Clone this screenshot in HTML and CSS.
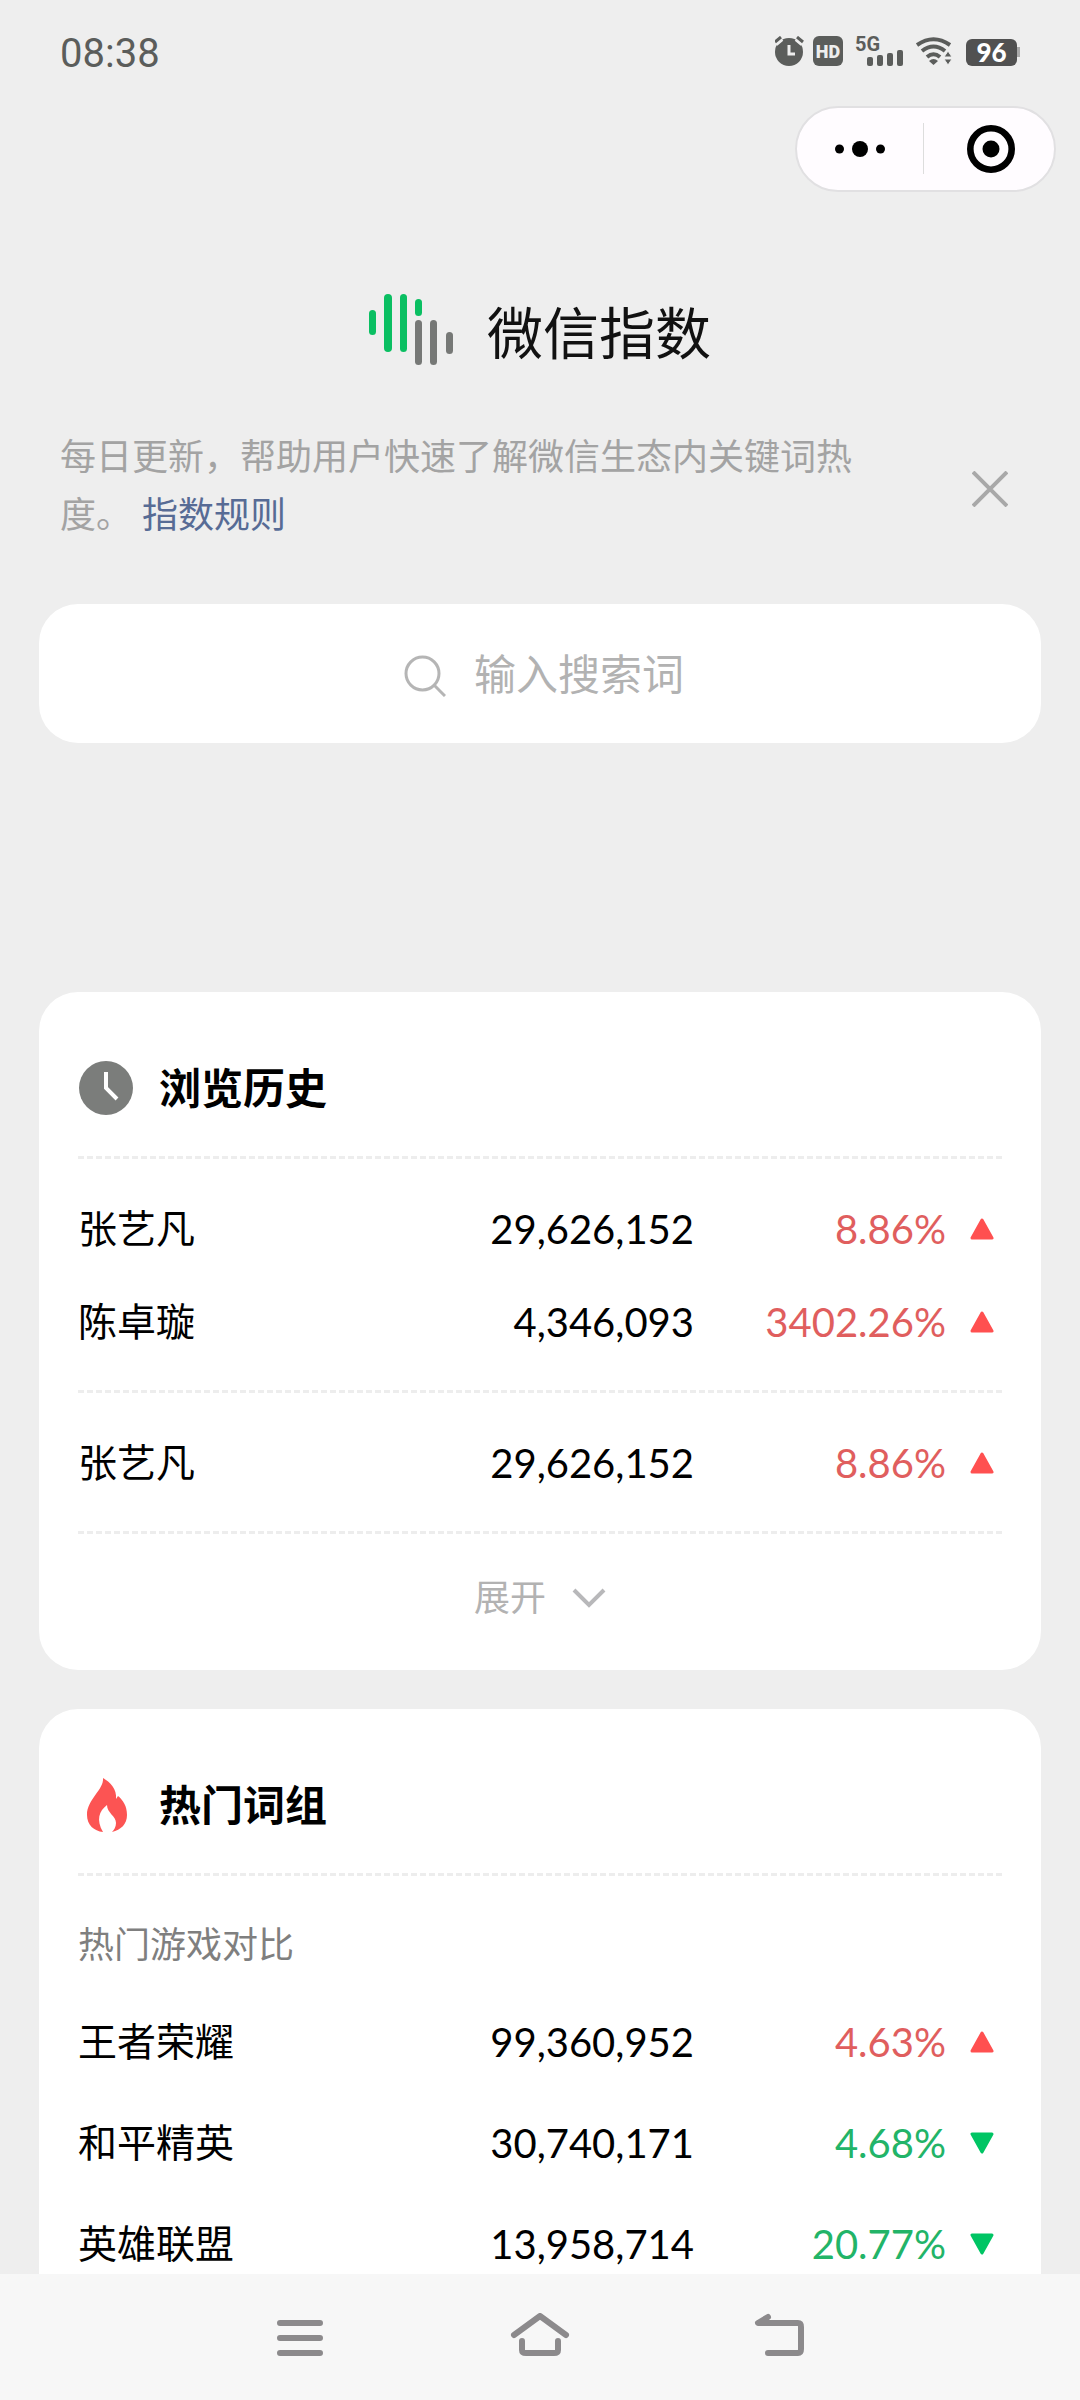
FILE: index.html
```html
<!DOCTYPE html>
<html lang="zh-CN">
<head>
  <meta charset="UTF-8" />
  <meta name="viewport" content="width=device-width, initial-scale=1.0"/>
  <title>微信指数</title>
  <link rel="stylesheet" href="styles.css">
</head>
<body>
  <div class="status-bar">
    <span class="time">08:38</span>
    <div class="status-icons">
      <svg class="alarm" width="30" height="30" viewBox="0 0 30 30">
        <circle cx="14" cy="16" r="14" fill="#5b5d5b"/>
        <path d="M0 7l6-5M28 7l-6-5" stroke="#eee" stroke-width="7"/>
        <path d="M0 6l6-5M28 6l-6-5" stroke="#5b5d5b" stroke-width="3"/>
        <path d="M14 9v9h6" fill="none" stroke="#eee" stroke-width="3"/>
      </svg>
      <span class="hd">HD</span>
      <div class="signal">
        <span class="net">5G</span>
        <svg width="36" height="16" viewBox="0 0 36 16" fill="#5b5d5b">
          <rect x="0" y="7" width="6" height="9" rx="2"/>
          <rect x="10" y="5" width="6" height="11" rx="2"/>
          <rect x="20" y="3" width="6" height="13" rx="2"/>
          <rect x="30" y="0" width="6" height="16" rx="2"/>
        </svg>
      </div>
      <svg class="wifi" width="36" height="28" viewBox="0 0 36 28">
        <g fill="none" stroke="#5b5d5b" stroke-width="4">
          <path d="M1 8Q17.500 -3.500 34 8"/>
          <path d="M6 14Q17.500 5 29 14"/>
          <path d="M11 20Q17.500 14.500 24 20"/>
        </g>
        <path d="M13 24q4.500-4 9 0l-4.500 4z" fill="#5b5d5b"/>
        <path d="M28 20l4-6 4 6zM28 22l4 6 4-6z" fill="#5b5d5b" stroke="#eee" stroke-width="1"/>
      </svg>
      <span class="battery">96</span>
    </div>
  </div>

  <main>
    <div class="capsule">
      <button aria-label="更多">
        <svg width="52" height="18" viewBox="0 0 52 18">
          <circle cx="5.500" cy="9" r="4.500"/><circle cx="26" cy="9" r="8"/><circle cx="46.500" cy="9" r="4.500"/>
        </svg>
      </button>
      <button class="close" aria-label="关闭">
        <svg width="48" height="48" viewBox="0 0 48 48">
          <circle cx="24" cy="24" r="20.700" fill="none" stroke="#000" stroke-width="6.600"/><circle cx="24" cy="24" r="8.500"/>
        </svg>
      </button>
    </div>

    <header class="brand">
      <svg width="84" height="72" viewBox="0 0 84 72">
        <g fill="#0abf62">
          <rect x="0" y="16" width="7" height="25" rx="3.500"/>
          <rect x="15" y="0" width="8" height="58" rx="4"/>
          <rect x="31" y="0" width="7" height="58" rx="3.500"/>
          <rect x="46" y="5" width="7" height="17" rx="3.500"/>
        </g>
        <g fill="#767876">
          <rect x="46" y="26" width="7" height="45" rx="3.500"/>
          <rect x="61" y="26" width="7" height="45" rx="3.500"/>
          <rect x="77" y="38" width="7" height="22" rx="3.500"/>
        </g>
      </svg>
      <h1>微信指数</h1>
    </header>

    <div class="notice">
      <p>每日更新，帮助用户快速了解微信生态内关键词热度。<a href="#">指数规则</a></p>
      <button aria-label="关闭提示">
        <svg width="36" height="36" viewBox="0 0 36 36" stroke="#a8a8a8" stroke-width="4">
          <path d="M1 1l34 34M35 1L1 35"/>
        </svg>
      </button>
    </div>

    <label class="search">
      <svg width="42" height="42" viewBox="0 0 42 42" fill="none" stroke="#b5b5b5" stroke-width="3">
        <circle cx="18.500" cy="18.500" r="16.500"/><path d="M30 30l11 11"/>
      </svg>
      <input type="text" placeholder="输入搜索词" aria-label="输入搜索词">
    </label>

    <section class="card">
      <h2>
        <svg width="54" height="54" viewBox="0 0 54 54">
          <circle cx="27" cy="27" r="27" fill="#7b7d7b"/>
          <path d="M27 11v16l11 11" fill="none" stroke="#fff" stroke-width="4"/>
        </svg>
        <span>浏览历史</span>
      </h2>
      <div class="group">
        <table>
          <tr><td class="name">张艺凡</td><td class="num">29,626,152</td><td class="pct up">8.86%</td><td class="arrow up"><svg viewBox="0 0 24 22"><path d="M12 2L22 20H2z"/></svg></td></tr>
          <tr><td class="name">陈卓璇</td><td class="num">4,346,093</td><td class="pct up">3402.26%</td><td class="arrow up"><svg viewBox="0 0 24 22"><path d="M12 2L22 20H2z"/></svg></td></tr>
        </table>
      </div>
      <div class="group">
        <table>
          <tr><td class="name">张艺凡</td><td class="num">29,626,152</td><td class="pct up">8.86%</td><td class="arrow up"><svg viewBox="0 0 24 22"><path d="M12 2L22 20H2z"/></svg></td></tr>
        </table>
      </div>
      <button class="expand">
        <span>展开</span>
        <svg width="34" height="20" viewBox="0 0 34 20" fill="none" stroke="#b8b8ba" stroke-width="4">
          <path d="M2 2l15 15 15-15"/>
        </svg>
      </button>
    </section>

    <section class="card">
      <h2>
        <svg width="54" height="56" viewBox="0 0 54 56">
          <path d="M24 1C25 13 8 22 8 38c0 10 7 16 16 17C17 43 20 34 28 28c0 8 9 11 9 18 0 4-2 7-4 9 9-2 15-8 15-17 0-9-4-15-9-19l-2 3C38 12 31 5 24 1z" fill="#fc5453"/>
        </svg>
        <span>热门词组</span>
      </h2>
      <div class="group hot">
        <h3>热门游戏对比</h3>
        <table>
          <tr><td class="name">王者荣耀</td><td class="num">99,360,952</td><td class="pct up">4.63%</td><td class="arrow up"><svg viewBox="0 0 24 22"><path d="M12 2L22 20H2z"/></svg></td></tr>
          <tr><td class="name">和平精英</td><td class="num">30,740,171</td><td class="pct down">4.68%</td><td class="arrow down"><svg viewBox="0 0 24 22"><path d="M12 20L2 2H22z"/></svg></td></tr>
          <tr><td class="name">英雄联盟</td><td class="num">13,958,714</td><td class="pct down">20.77%</td><td class="arrow down"><svg viewBox="0 0 24 22"><path d="M12 20L2 2H22z"/></svg></td></tr>
        </table>
      </div>
    </section>
  </main>

  <nav>
    <button aria-label="菜单">
      <svg width="60" height="44" viewBox="0 0 60 44"><path d="M10 10h40M10 25h40M10 40h40"/></svg>
    </button>
    <button aria-label="主页">
      <svg width="60" height="44" viewBox="0 0 60 44"><path d="M4 22L30 3l26 19M12 28v9q0 3 4 3h28q4 0 4-3v-9"/></svg>
    </button>
    <button aria-label="返回">
      <svg width="60" height="44" viewBox="0 0 60 44"><path d="M18 4L8 10h40q3 0 3 4v22q0 4-3 4H18"/></svg>
    </button>
  </nav>
</body>
</html>
```
FILE: styles.css
```css
* {
  box-sizing: border-box;
}
body {
  font-family: 'Noto Sans CJK SC', sans-serif;
  background: #eee;
  color: #000;
  margin: 0;
  height: 100vh;
  display: flex;
  flex-direction: column;
  overflow: hidden;
}
svg {
  display: block;
  flex: none;
}
button {
  font: inherit;
  color: inherit;
  background: none;
  border: none;
  padding: 0;
  cursor: pointer;
}
.status-bar {
  height: 106px;
  padding: 0 60px;
  display: flex;
  flex: none;
  justify-content: space-between;
  color: #5b5d5b;
  font-family: Roboto, sans-serif;
}
.time {
  font-size: 40px;
  line-height: 108px;
}
.status-icons {
  display: flex;
  align-items: center;
  height: 30px;
  margin-top: 36px;
}
.hd {
  width: 30px;
  height: 30px;
  margin-left: 8px;
  border-radius: 6px;
  background: #5b5d5b;
  color: #eee;
  font-size: 18px;
  font-weight: 900;
  line-height: 31px;
  text-align: center;
}
.signal {
  display: grid;
  width: 48px;
  height: 30px;
  margin-left: 12px;
}
.signal span, .signal svg {
  grid-area: 1 / 1;
}
.signal svg {
  align-self: end;
  justify-self: end;
}
.net {
  font-size: 20px;
  font-weight: bold;
  line-height: 16px;
}
.wifi {
  margin-left: 13px;
}
.battery {
  position: relative;
  width: 51px;
  height: 27px;
  margin-left: 14px;
  margin-right: 3px;
  margin-top: 3px;
  border-radius: 6px;
  background: #515151;
  color: #fff;
  font-family: Lato, sans-serif;
  font-size: 26px;
  font-weight: 900;
  line-height: 27px;
  text-align: center;
}
.battery::after {
  content: '';
  position: absolute;
  left: 51px;
  top: 8px;
  width: 3px;
  height: 10px;
  background: #aaa;
}
main {
  flex: 1;
  min-height: 0;
  overflow: hidden;
  padding: 0 39px;
}
.capsule {
  display: flex;
  width: 261px;
  height: 86px;
  margin-left: auto;
  margin-right: -15px;
  border: 2px solid #e1e0e2;
  border-radius: 43px;
  background: #fffcff;
}
.capsule button {
  flex: 1;
  display: flex;
  align-items: center;
  justify-content: center;
  position: relative;
}
.capsule .close {
  padding-left: 6px;
}
.capsule .close::before {
  content: '';
  position: absolute;
  left: 0;
  top: 15px;
  height: 51px;
  border-left: 1px solid #ddd;
}
.brand {
  display: flex;
  align-items: center;
  justify-content: center;
  gap: 34px;
  margin-top: 90px;
  height: 96px;
}
h1 {
  margin: 0;
  font-size: 56px;
  font-weight: normal;
  line-height: 80px;
  color: #111;
}
.notice {
  display: flex;
  align-items: center;
  justify-content: space-between;
  margin-top: 47px;
  padding: 0 33px 0 21px;
}
.notice button {
  margin-top: 12px;
}
.notice p {
  margin: 0;
  max-width: 800px;
  font-size: 36px;
  line-height: 58px;
  color: #a3a3a3;
}
.notice a {
  margin-left: 10px;
  color: #576b95;
  text-decoration: none;
}
.search {
  display: flex;
  align-items: center;
  justify-content: center;
  gap: 28px;
  height: 139px;
  margin-top: 63px;
  padding-left: 8px;
  padding-top: 4px;
  border-radius: 39px;
  background: #fff;
}
.search input {
  width: 5em;
  padding: 0 0 8px;
  border: none;
  outline: none;
  background: none;
  font: inherit;
  font-size: 42px;
}
.search input::placeholder {
  color: #b2b2b2;
}
.card {
  padding: 0 39px 9px;
  border-radius: 39px;
  background: #fff;
  margin-top: 39px;
}
.search + .card {
  margin-top: 249px;
}
h2 {
  display: flex;
  align-items: center;
  gap: 26px;
  height: 164px;
  margin: 0;
  padding-top: 28px;
  padding-left: 1px;
  font-size: 42px;
  font-weight: bold;
}
h2 span, .expand span {
  padding-bottom: 6px;
}
.group {
  border-top: 3px dashed #ededed;
  padding: 23px 0 22px;
}
table {
  width: 100%;
  table-layout: fixed;
  border-collapse: collapse;
}
td {
  height: 93px;
  padding: 0;
  line-height: 50px;
}
.name {
  padding-bottom: 5px;
  font-size: 39px;
}
.num, .pct {
  width: 252px;
  font-family: Lato, sans-serif;
  font-size: 40px;
  text-align: right;
}
.arrow {
  width: 56px;
}
.arrow svg {
  width: 24px;
  height: 22px;
  margin-left: 24px;
  fill: currentColor;
  stroke: currentColor;
  stroke-width: 3px;
  stroke-linejoin: round;
}
.pct.up {
  color: #e05e5e;
}
.pct.down {
  color: #22b468;
}
.arrow.up {
  color: #ff5050;
}
.arrow.down {
  color: #00c564;
}
.expand {
  display: flex;
  align-items: center;
  justify-content: center;
  gap: 26px;
  width: 100%;
  height: 130px;
  border-top: 3px dashed #ededed;
  font-size: 36px;
  color: #b2b2b2;
}
.hot {
  padding-top: 48px;
}
.hot td {
  height: 101px;
}
h3 {
  margin: 0 0 31px;
  font-size: 36px;
  font-weight: normal;
  line-height: 36px;
  color: #7f7f7f;
}
nav {
  display: flex;
  flex: none;
  align-items: center;
  justify-content: center;
  height: 126px;
  padding-bottom: 5px;
  background: #f7f7f7;
}
nav button {
  width: 240px;
  display: flex;
  justify-content: center;
}
nav svg {
  fill: none;
  stroke: #8c8a8c;
  stroke-width: 6px;
  stroke-linecap: round;
  stroke-linejoin: round;
}
```
